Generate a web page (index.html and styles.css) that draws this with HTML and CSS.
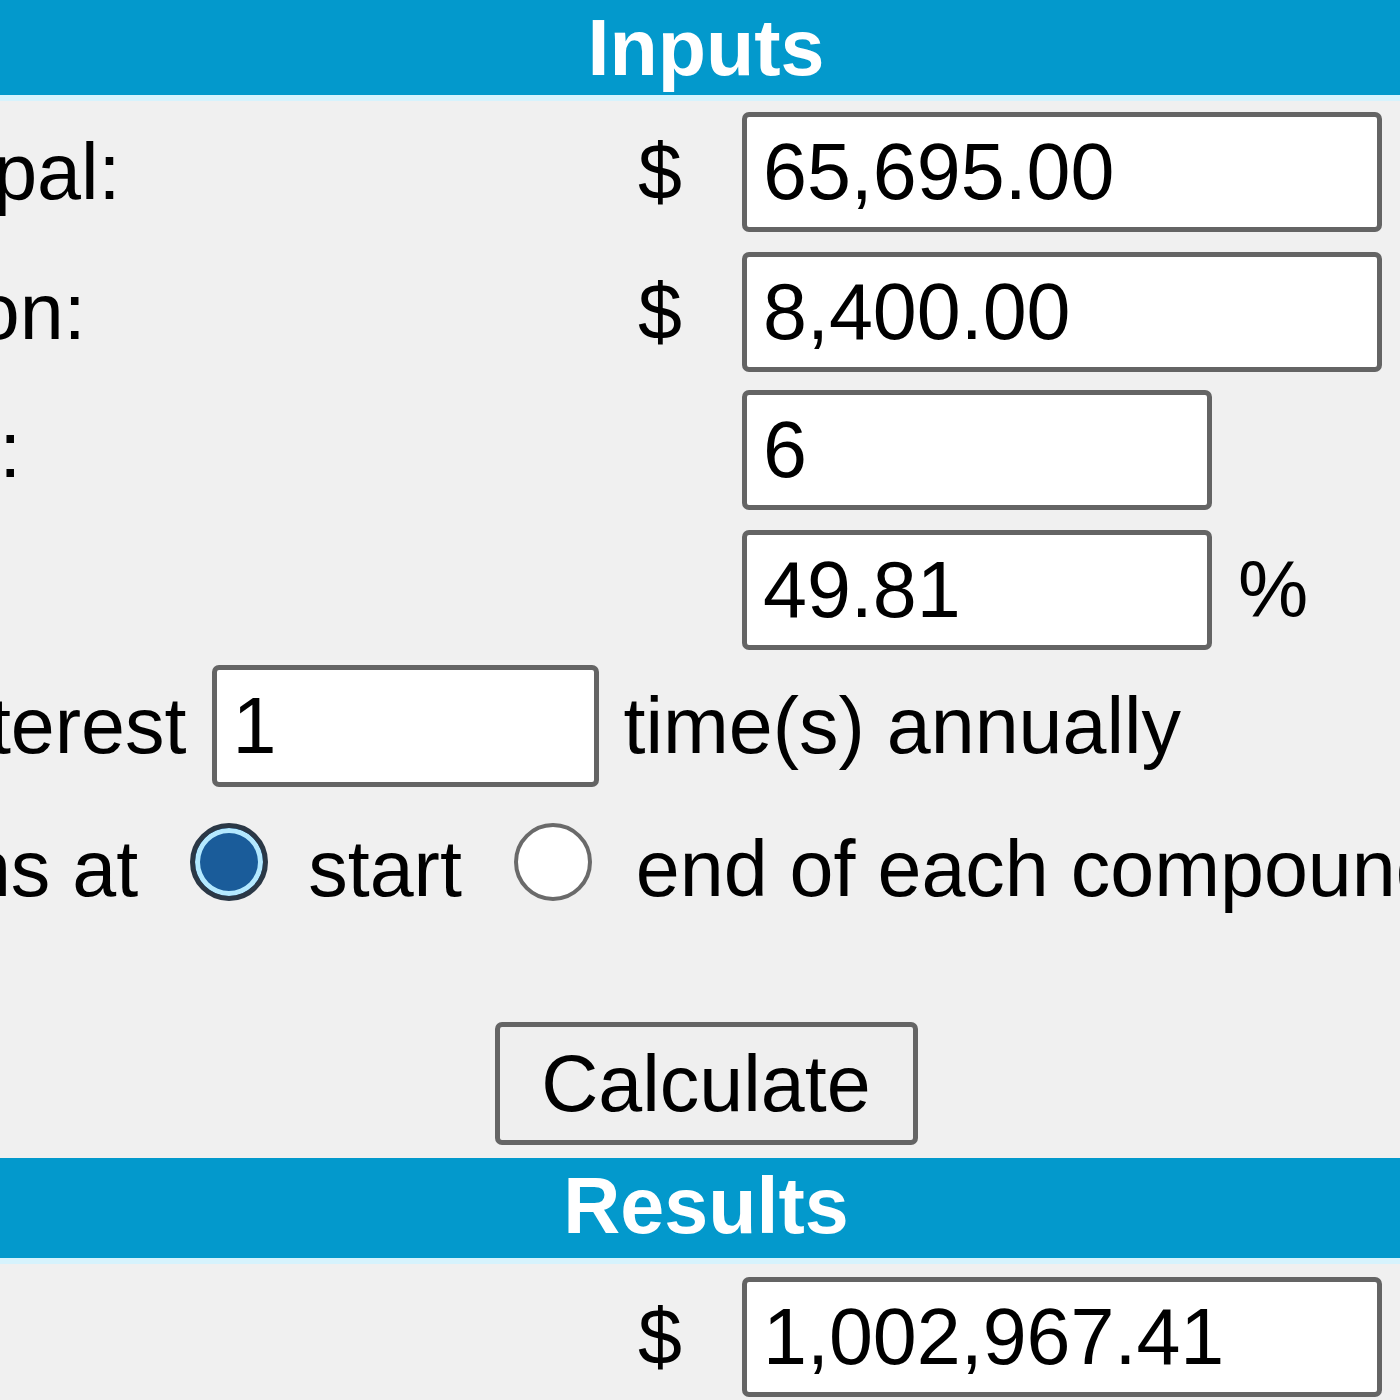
FILE: index.html
```html
<!DOCTYPE html>
<html lang="en">
<head>
<meta charset="utf-8">
<title>Compound Interest Calculator</title>
<link rel="stylesheet" href="styles.css">
</head>
<body>
<div class="page">
  <div class="bar bar-top">Inputs</div>

  <div class="form">
    <div class="row row-1">
      <span class="label">Current principal:</span>
      <span class="unit">$</span>
      <input class="field field-wide" type="text" value="65,695.00">
    </div>
    <div class="row row-2">
      <span class="label">Annual addition:</span>
      <span class="unit">$</span>
      <input class="field field-wide" type="text" value="8,400.00">
    </div>
    <div class="row row-3">
      <span class="label">Years to grow:</span>
      <span class="unit"></span>
      <input class="field field-mid" type="text" value="6">
    </div>
    <div class="row row-4">
      <span class="label">Interest rate:</span>
      <span class="unit"></span>
      <input class="field field-mid" type="text" value="49.81">
      <span class="pct">%</span>
    </div>
    <div class="row row-5">
      <span class="text">Compound interest</span>
      <input class="field field-short" type="text" value="1">
      <span class="text">time(s) annually</span>
    </div>
    <div class="row row-6">
      <span class="text">Make additions at</span>
      <input class="radio" type="radio" name="when" checked>
      <span class="text opt">start</span>
      <input class="radio" type="radio" name="when">
      <span class="text opt opt-end">end of each compounding period</span>
    </div>
  </div>

  <div class="actions">
    <button class="btn" type="button">Calculate</button>
  </div>

  <div class="bar bar-results">Results</div>

  <div class="form">
    <div class="row row-result">
      <span class="label">Future value:</span>
      <span class="unit">$</span>
      <input class="field field-wide" type="text" value="1,002,967.41">
    </div>
  </div>
</div>
</body>
</html>
```

FILE: styles.css
```css
html, body {
  margin: 0;
  padding: 0;
  overflow: hidden;
  background: #f0f0f0;
}

body {
  font-family: "Liberation Sans", Arial, sans-serif;
  font-size: 79px;
  color: #000;
}

.page {
  width: 1412px;
}

.bar {
  background: #0399cc;
  border-bottom: 6px solid #d6f3fd;
  color: #ffffff;
  font-weight: bold;
  text-align: center;
  line-height: 95px;
}

.bar-top {
  height: 95px;
}

.bar-results {
  height: 100px;
  margin-top: 13px;
}

.form {
  margin-left: -481px;
}

.row {
  display: flex;
  align-items: center;
  white-space: nowrap;
}

.row-1 { margin-top: 11px; height: 120px; }
.row-2 { margin-top: 20px; height: 120px; }
.row-3 { margin-top: 18px; height: 120px; }
.row-4 { margin-top: 20px; height: 120px; }
.row-5 { margin-top: 15px; height: 122px; gap: 25px; }
.row-6 { margin-top: 22px; height: 120px; }
.row-result { margin-top: 13px; height: 120px; }

.label {
  width: 1119px;
  flex: none;
}

.unit {
  width: 104px;
  flex: none;
}

.pct {
  margin-left: 26px;
}

.field {
  box-sizing: border-box;
  height: 120px;
  border: 5px solid #646464;
  border-radius: 7px;
  background: #ffffff;
  font-family: "Liberation Sans", Arial, sans-serif;
  font-size: 79px;
  color: #000;
  padding: 0 0 0 16px;
  margin: 0;
  outline: none;
}

.row-5 .field {
  height: 122px;
}

.field-wide { width: 640px; }
.field-mid { width: 470px; }
.field-short { width: 387px; }

.radio {
  appearance: none;
  -webkit-appearance: none;
  box-sizing: border-box;
  width: 78px;
  height: 78px;
  margin: 0 0 15px 52px;
  border-radius: 50%;
  border: 4px solid #6a6a6a;
  background: #ffffff;
  flex: none;
}

.radio:checked {
  border: 5px solid #2b3846;
  background: #1a5c9a;
  box-shadow: inset 0 0 0 5px #b4e9ff;
}

.opt {
  margin-left: 40px;
}

.opt-end {
  margin-left: 44px;
}

.actions {
  margin-top: 93px;
  display: flex;
  justify-content: center;
}

.btn {
  box-sizing: border-box;
  width: 423px;
  height: 123px;
  margin: 0;
  padding: 0;
  border: 5px solid #646464;
  border-radius: 7px;
  background: #efefef;
  font-family: "Liberation Sans", Arial, sans-serif;
  font-size: 79px;
  color: #000;
}
```
